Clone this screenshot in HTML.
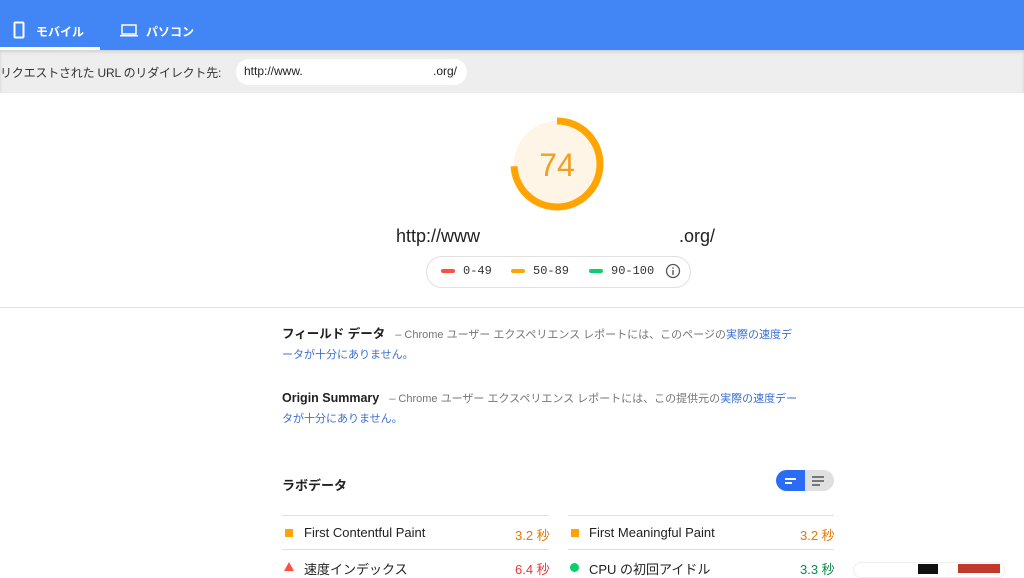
<!DOCTYPE html>
<html><head><meta charset="utf-8"><style>
body{margin:0;width:1024px;height:574px;overflow:hidden;background:#fff;font-family:"Liberation Sans","Noto Sans CJK JP",sans-serif;position:relative}
.a{position:absolute}
.top{left:0;top:0;width:1024px;height:50px;background:#4285f4}
.tab{color:#fff;font-size:12px;font-weight:bold;top:23px}
.gray{left:0;top:50px;width:1024px;height:43px;background:#eee;box-shadow:inset 0 2px 3px rgba(0,0,0,.12)}
.mono{font-family:"Liberation Mono",monospace;font-size:12px;color:#333}
.f{font-size:11px;color:#757575;line-height:20px;width:520px}
.f b{color:#212121;font-size:12.5px;margin-right:10px}
.f span{color:#3b6fd0}
.row{font-size:13px;color:#212121}
.line{height:1px;background:#e0e0e0}
</style></head><body>
<div class="a top"></div>
<svg class="a" style="left:13px;top:21px" width="12" height="18"><rect x="1.5" y="1.5" width="9" height="15" rx="1" fill="none" stroke="#fff" stroke-width="2"/></svg>
<div class="a tab" style="left:36px">モバイル</div>
<svg class="a" style="left:120px;top:24px" width="18" height="14"><rect x="2" y="1" width="14" height="9" fill="none" stroke="#fff" stroke-width="1.5"/><rect x="0" y="11" width="18" height="1.5" fill="#fff"/></svg>
<div class="a tab" style="left:146px">パソコン</div>
<div class="a" style="left:0;top:47px;width:100px;height:3px;background:#fff"></div>
<div class="a gray"></div>
<div class="a" style="left:0;top:64px;font-size:12px;color:#333;letter-spacing:-0.2px">リクエストされた URL のリダイレクト先:</div>
<div class="a" style="left:236px;top:59px;width:231px;height:26px;background:#fff;border-radius:13px"></div>
<div class="a" style="left:244px;top:64px;font-size:12px;color:#212121">http://www.</div>
<div class="a" style="left:433px;top:64px;font-size:12px;color:#212121">.org/</div>
<svg class="a" style="left:507px;top:114px" width="100" height="100">
<circle cx="50" cy="50" r="43" fill="#fff5e6"/>
<circle cx="50" cy="50" r="43" fill="none" stroke="#ffa400" stroke-width="7" stroke-dasharray="200 270.2" transform="rotate(-90 50 50)"/>
<text x="50" y="62" text-anchor="middle" font-size="32" fill="#f0a020" font-family="Liberation Sans">74</text></svg>
<div class="a" style="left:396px;top:226px;font-size:18px;color:#212121">http://www</div>
<div class="a" style="left:679px;top:226px;font-size:18px;color:#212121">.org/</div>
<div class="a" style="left:426px;top:256px;width:263px;height:30px;border:1px solid #e0e0e0;border-radius:16px"></div>
<div class="a" style="left:441px;top:269px;width:14px;height:4px;border-radius:2px;background:#ff4e42"></div>
<div class="a mono" style="left:463px;top:264px">0-49</div>
<div class="a" style="left:511px;top:269px;width:14px;height:4px;border-radius:2px;background:#ffa400"></div>
<div class="a mono" style="left:533px;top:264px">50-89</div>
<div class="a" style="left:589px;top:269px;width:14px;height:4px;border-radius:2px;background:#0cce6b"></div>
<div class="a mono" style="left:611px;top:264px">90-100</div>
<svg class="a" style="left:665px;top:263px" width="16" height="16"><circle cx="8" cy="8" r="6.5" fill="none" stroke="#555" stroke-width="1.3"/><rect x="7.3" y="7" width="1.4" height="5" fill="#555"/><rect x="7.3" y="4.3" width="1.4" height="1.4" fill="#555"/></svg>
<div class="a line" style="left:0;top:307px;width:1024px"></div>
<div class="a f" style="left:282px;top:324px"><b>フィールド データ</b>– Chrome ユーザー エクスペリエンス レポートには、このページの<span>実際の速度データが十分にありません。</span></div>
<div class="a f" style="left:282px;top:388px"><b>Origin Summary</b>– Chrome ユーザー エクスペリエンス レポートには、この提供元の<span>実際の速度データが十分にありません。</span></div>
<div class="a" style="left:282px;top:475px;font-size:13px;font-weight:bold;color:#212121">ラボデータ</div>
<div class="a" style="left:776px;top:470px;width:29px;height:21px;background:#2a6df4;border-radius:11px 0 0 11px"></div>
<div class="a" style="left:805px;top:470px;width:29px;height:21px;background:#e0e0e0;border-radius:0 11px 11px 0"></div>
<div class="a" style="left:785px;top:478px;width:11px;height:1.5px;background:#fff"></div><div class="a" style="left:785px;top:482px;width:7px;height:1.5px;background:#fff"></div>
<div class="a" style="left:812px;top:476px;width:12px;height:1.5px;background:#777"></div><div class="a" style="left:812px;top:480px;width:12px;height:1.5px;background:#777"></div><div class="a" style="left:812px;top:484px;width:8px;height:1.5px;background:#777"></div>
<div class="a line" style="left:282px;top:515px;width:267px"></div>
<div class="a line" style="left:568px;top:515px;width:266px"></div>
<div class="a line" style="left:282px;top:549px;width:267px"></div>
<div class="a line" style="left:568px;top:549px;width:266px"></div>
<div class="a" style="left:285px;top:529px;width:8px;height:8px;background:#ffa400"></div>
<div class="a row" style="left:304px;top:525px">First Contentful Paint</div>
<div class="a row" style="left:515px;top:525px;color:#e67700">3.2 秒</div>
<div class="a" style="left:571px;top:529px;width:8px;height:8px;background:#ffa400"></div>
<div class="a row" style="left:589px;top:525px">First Meaningful Paint</div>
<div class="a row" style="left:800px;top:525px;color:#e67700">3.2 秒</div>
<svg class="a" style="left:284px;top:562px" width="10" height="10"><polygon points="5,0 10,9 0,9" fill="#ff4e42"/></svg>
<div class="a row" style="left:304px;top:559px">速度インデックス</div>
<div class="a row" style="left:515px;top:559px;color:#e53935">6.4 秒</div>
<div class="a" style="left:570px;top:563px;width:9px;height:9px;border-radius:50%;background:#0cce6b"></div>
<div class="a row" style="left:589px;top:559px">CPU の初回アイドル</div>
<div class="a row" style="left:800px;top:559px;color:#0a8a4a">3.3 秒</div>
<div class="a" style="left:853px;top:562px;width:150px;height:14px;border:1px solid #eee;border-radius:8px;background:#fff"></div>
<div class="a" style="left:918px;top:564px;width:20px;height:10px;background:#111"></div>
<div class="a" style="left:958px;top:564px;width:42px;height:9px;background:#c0392b"></div>
</body></html>
